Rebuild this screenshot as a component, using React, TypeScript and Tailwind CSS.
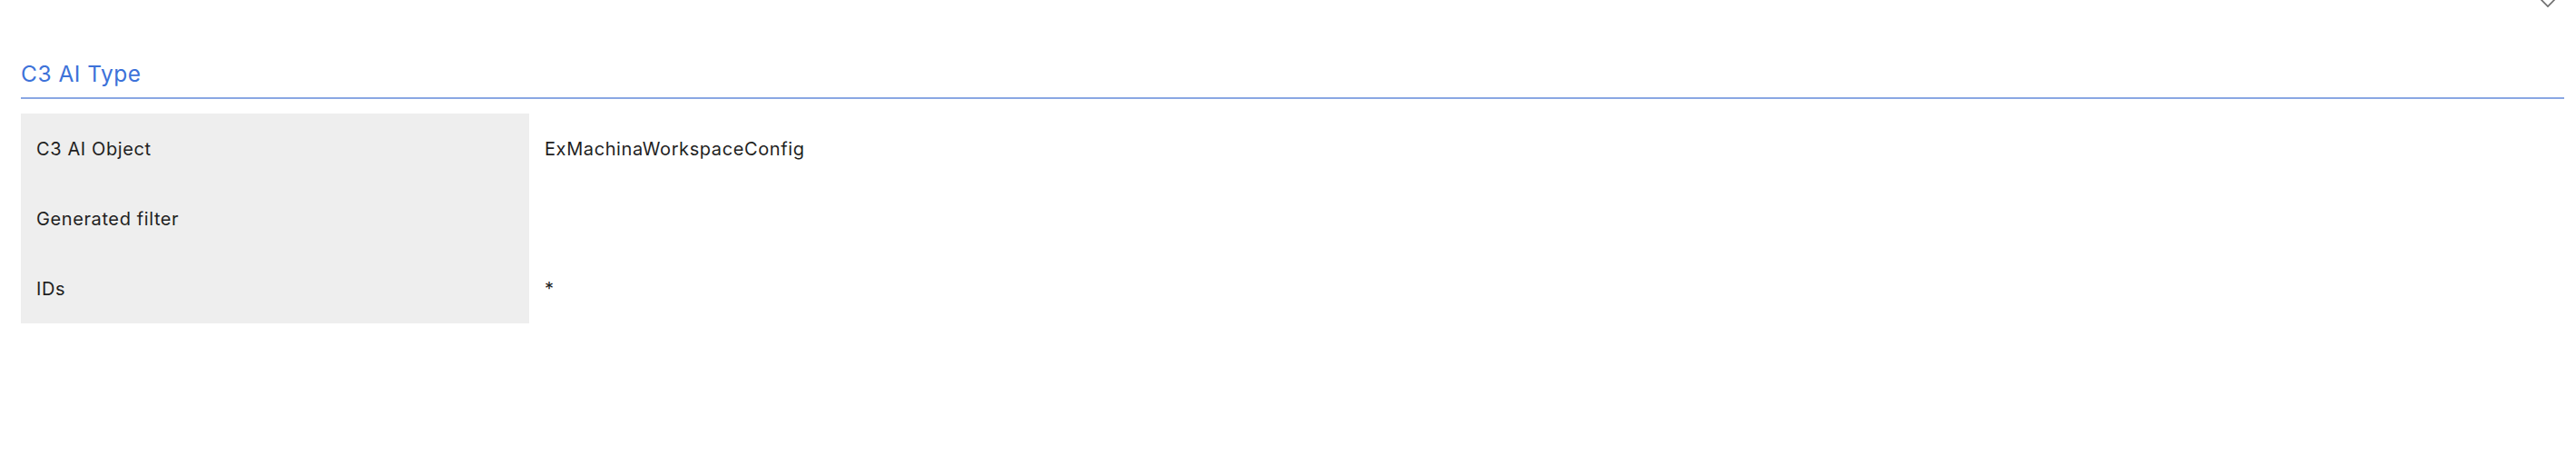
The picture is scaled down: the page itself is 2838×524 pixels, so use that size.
export default function App() {
  const rows = [
    { label: "C3 AI Object", value: "ExMachinaWorkspaceConfig" },
    { label: "Generated filter", value: "" },
    { label: "IDs", value: "*" },
  ];
  return (
    <div
      className="relative w-[2838px] h-[524px] bg-white pl-[23px] pr-[13px] overflow-hidden"
      style={{ fontFamily: "Inter, 'Noto Sans', sans-serif" }}
    >
      <svg
        className="absolute left-[2796px] top-[-12px]"
        width="22"
        height="22"
        viewBox="0 0 22 22"
        fill="none"
        stroke="#6b6b6b"
        strokeWidth="1.6"
      >
        <path d="M1 9 L11 19 L21 9" />
      </svg>
      <div className="pt-[65px]">
        <div className="text-[24.5px] leading-[32px] tracking-[0.5px] text-[#3d72d9] h-[42px]">C3 AI Type</div>
        <div className="h-[2px] bg-[#8aa7e3]" />
        <div className="mt-[16px] flex flex-col">
          {rows.map((r) => (
            <div key={r.label} className="flex h-[77px] items-center">
              <div className="w-[560px] h-full bg-[#eeeeee] flex items-center pl-[17px] text-[20px] tracking-[0.6px] text-[#1f1f1f]">
                {r.label}
              </div>
              <div className="pl-[17px] text-[20px] tracking-[0.6px] text-[#1f1f1f]">{r.value}</div>
            </div>
          ))}
        </div>
      </div>
    </div>
  );
}
